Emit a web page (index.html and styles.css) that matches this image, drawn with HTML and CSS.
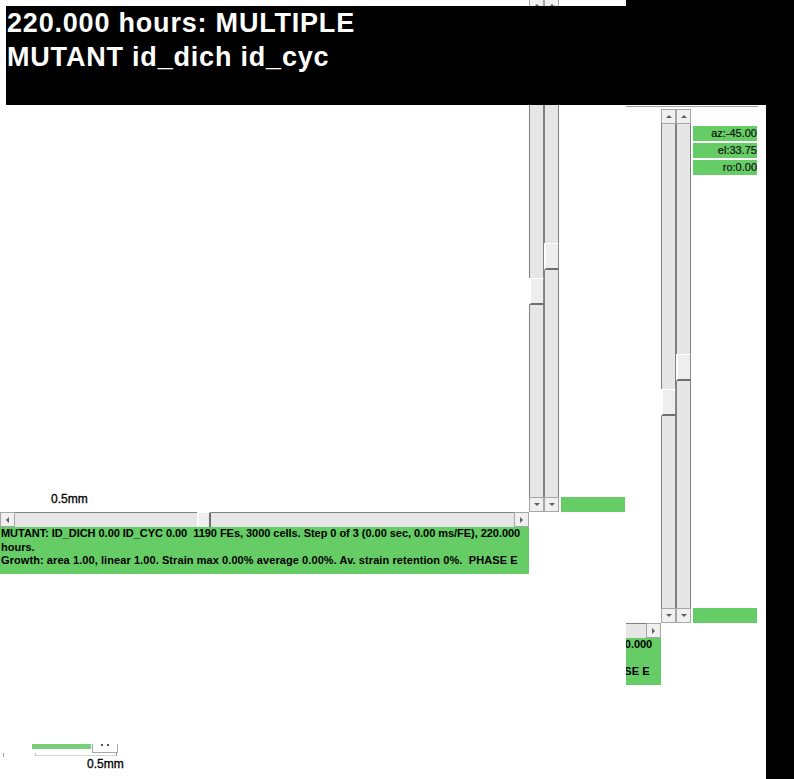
FILE: index.html
```html
<!DOCTYPE html>
<html>
<head>
<meta charset="utf-8">
<link rel="stylesheet" href="styles.css">
</head>
<body>
<div class="fig fig-main">
  <div class="canvas"><span class="scale-label">0.5mm</span></div>
  <div class="vscrolls">
    <div class="vscroll">
      <div class="sbtn"><i class="tri-up"></i></div>
      <div class="vtrack"><div class="thumb thumb-a"></div></div>
      <div class="sbtn"><i class="tri-down"></i></div>
    </div>
    <div class="vscroll">
      <div class="sbtn"><i class="tri-up"></i></div>
      <div class="vtrack"><div class="thumb thumb-b"></div></div>
      <div class="sbtn"><i class="tri-down"></i></div>
    </div>
  </div>
  <div class="side">
    <div class="lbl">az:-45.00</div>
    <div class="lbl">el:33.75</div>
    <div class="lbl">ro:0.00</div>
    <div class="side-bar"></div>
  </div>
  <div class="hscroll">
    <div class="hbtn"><i class="tri-left"></i></div>
    <div class="htrack"><div class="hthumb"></div></div>
    <div class="hbtn"><i class="tri-right"></i></div>
  </div>
  <div class="status">
    <div class="sline sline-1">MUTANT: ID_DICH 0.00 ID_CYC 0.00  1190 FEs, 3000 cells. Step 0 of 3 (0.00 sec, 0.00 ms/FE), 220.000</div>
    <div class="sline">hours.</div>
    <div class="sline sline-3">Growth: area 1.00, linear 1.00. Strain max 0.00% average 0.00%. Av. strain retention 0%.  PHASE E</div>
  </div>
</div>

<div class="title">220.000 hours: MULTIPLE<br>MUTANT id_dich id_cyc</div>

<div class="blackpane"></div>

<div class="win2">
  <div class="win2-rule"></div>
  <div class="fig fig-copy">
    <div class="canvas"><span class="scale-label">0.5mm</span></div>
    <div class="vscrolls">
      <div class="vscroll">
        <div class="sbtn"><i class="tri-up"></i></div>
        <div class="vtrack"><div class="thumb thumb-a"></div></div>
        <div class="sbtn"><i class="tri-down"></i></div>
      </div>
      <div class="vscroll">
        <div class="sbtn"><i class="tri-up"></i></div>
        <div class="vtrack"><div class="thumb thumb-b"></div></div>
        <div class="sbtn"><i class="tri-down"></i></div>
      </div>
    </div>
    <div class="side">
      <div class="lbl">az:-45.00</div>
      <div class="lbl">el:33.75</div>
      <div class="lbl">ro:0.00</div>
      <div class="side-bar"></div>
    </div>
    <div class="hscroll">
      <div class="hbtn"><i class="tri-left"></i></div>
      <div class="htrack"><div class="hthumb"></div></div>
      <div class="hbtn"><i class="tri-right"></i></div>
    </div>
    <div class="status">
      <div class="sline sline-1">MUTANT: ID_DICH 0.00 ID_CYC 0.00  1190 FEs, 3000 cells. Step 0 of 3 (0.00 sec, 0.00 ms/FE), 220.000</div>
      <div class="sline">hours.</div>
      <div class="sline sline-3">Growth: area 1.00, linear 1.00. Strain max 0.00% average 0.00%. Av. strain retention 0%.  PHASE E</div>
    </div>
  </div>
</div>

<div class="scalebar">
  <div class="sb-row">
    <div class="sb-green"></div>
    <div class="sb-box"><span class="sb-dot"></span><span class="sb-dot"></span></div>
  </div>
  <div class="sb-line"></div>
  <div class="sb-text">0.5mm</div>
  <span class="sb-tick"></span>
</div>
</body>
</html>
```
FILE: styles.css
```css
html, body {
  margin: 0;
  padding: 0;
}
body {
  width: 794px;
  height: 779px;
  overflow: hidden;
  position: relative;
  background: #ffffff;
  font-family: "Liberation Sans", Arial, sans-serif;
  color: #000;
}

/* ---------- figure ---------- */
.fig {
  width: 626px;
  display: grid;
  grid-template-columns: 529px 30px 2px 64px 1px;
  grid-template-rows: 514px 15px 47px;
  background: #fff;
}
.fig-main {
  position: absolute;
  left: 0;
  top: -2px;
}
.canvas {
  grid-column: 1;
  grid-row: 1;
  display: flex;
  align-items: flex-end;
  padding: 0 0 6px 51px;
  box-sizing: border-box;
}
.scale-label {
  font-size: 12px;
  line-height: 14px;
  -webkit-text-stroke: 0.3px #000;
}

.vscrolls {
  grid-column: 2;
  grid-row: 1;
  display: flex;
}
.vscroll {
  width: 15px;
  display: flex;
  flex-direction: column;
}
.sbtn {
  height: 15px;
  flex: none;
  box-sizing: border-box;
  background: #f0f0f0;
  border: 1px solid #a6a6a6;
  display: flex;
  align-items: center;
  justify-content: center;
}
.vtrack {
  flex: 1;
  background: #e6e6e6;
  border-left: 1px solid #808080;
  border-right: 1px solid #808080;
  display: flex;
  flex-direction: column;
}
.thumb {
  height: 27px;
  margin: 0 -1px;
  box-sizing: border-box;
  background: #eeeeee;
  border-top: 1px solid #ffffff;
  border-left: 2px solid #ffffff;
  border-right: 1px solid #8a8a8a;
  border-bottom: 2px solid #6e6e6e;
}
.thumb-a { margin-top: 265px; }
.thumb-b { margin-top: 230px; }

.tri-up, .tri-down, .tri-left, .tri-right {
  display: block;
  width: 0;
  height: 0;
}
.tri-up {
  border-left: 3px solid transparent;
  border-right: 3px solid transparent;
  border-bottom: 3px solid #606060;
}
.tri-down {
  border-left: 3px solid transparent;
  border-right: 3px solid transparent;
  border-top: 3px solid #606060;
}
.tri-left {
  border-top: 3px solid transparent;
  border-bottom: 3px solid transparent;
  border-right: 3px solid #606060;
}
.tri-right {
  border-top: 3px solid transparent;
  border-bottom: 3px solid transparent;
  border-left: 3px solid #606060;
}

.side {
  grid-column: 4;
  grid-row: 1;
  display: flex;
  flex-direction: column;
  padding-top: 17px;
  gap: 2px;
  box-sizing: border-box;
}
.lbl {
  height: 15px;
  background: #66cc66;
  font-size: 11px;
  line-height: 15px;
  text-align: right;
  color: #111;
  white-space: nowrap;
  overflow: hidden;
  -webkit-text-stroke: 0.2px #111;
}
.side-bar {
  margin-top: auto;
  height: 15px;
  background: #66cc66;
}

.hscroll {
  grid-column: 1;
  grid-row: 2;
  display: flex;
  height: 15px;
}
.hbtn {
  width: 15px;
  flex: none;
  box-sizing: border-box;
  background: #f0f0f0;
  border: 1px solid #a6a6a6;
  display: flex;
  align-items: center;
  justify-content: center;
}
.htrack {
  flex: 1;
  background: #e6e6e6;
  border-top: 1px solid #808080;
  display: flex;
}
.hthumb {
  width: 14px;
  margin-left: 182px;
  margin-top: -1px;
  box-sizing: border-box;
  background: #eeeeee;
  border-left: 2px solid #ffffff;
  border-top: 1px solid #ffffff;
  border-right: 2px solid #6e6e6e;
}

.status {
  grid-column: 1;
  grid-row: 3;
  background: #66cc66;
  font-size: 11px;
  font-weight: bold;
  line-height: 13.5px;
  padding-left: 1px;
  overflow: hidden;
}
.sline {
  white-space: pre;
}
.sline-1 {
  letter-spacing: -0.04px;
}
.sline-3 {
  letter-spacing: 0.08px;
}

/* ---------- overlays / windows ---------- */
.title {
  position: absolute;
  left: 6px;
  top: 6px;
  width: 620px;
  height: 99px;
  box-sizing: border-box;
  padding-left: 1px;
  background: #000;
  color: #fff;
  font-weight: bold;
  font-size: 27px;
  line-height: 34px;
  letter-spacing: 0.8px;
  white-space: nowrap;
}
.blackpane {
  position: absolute;
  left: 626px;
  top: 0;
  width: 168px;
  height: 779px;
  background: #000;
}
.win2 {
  position: absolute;
  left: 626px;
  top: 105px;
  width: 140px;
  height: 674px;
  background: #fff;
  overflow: hidden;
  padding-top: 1px;
  box-sizing: border-box;
}
.win2-rule {
  width: 132px;
  height: 1px;
  background: #a0a0a0;
}
.fig-copy {
  margin-left: -494px;
  margin-top: 2px;
}

/* ---------- bottom-left scale bar ---------- */
.scalebar {
  position: absolute;
  left: 0;
  top: 744px;
  width: 130px;
}
.sb-row {
  display: flex;
  height: 9px;
}
.sb-green {
  margin-left: 32px;
  width: 59px;
  height: 5px;
  background: #77d077;
}
.sb-box {
  margin-left: 1px;
  width: 26px;
  height: 9px;
  box-sizing: border-box;
  border: 1px solid #a8a8a8;
  border-top: none;
  display: flex;
  justify-content: center;
  gap: 4px;
  background: #fff;
}
.sb-dot {
  width: 2px;
  height: 2px;
  background: #555;
}
.sb-line {
  margin-left: 35px;
  width: 82px;
  height: 3px;
  box-sizing: border-box;
  border-left: 1px solid #bbbbbb;
  border-right: 1px solid #888888;
  border-bottom: 1px solid #d4d4d4;
}
.sb-text {
  margin-top: 1px;
  padding-left: 87px;
  font-size: 12px;
  line-height: 14px;
  -webkit-text-stroke: 0.3px #000;
}
.sb-tick {
  position: absolute;
  left: 3px;
  top: 9px;
  width: 1px;
  height: 4px;
  background: #999;
}
```
